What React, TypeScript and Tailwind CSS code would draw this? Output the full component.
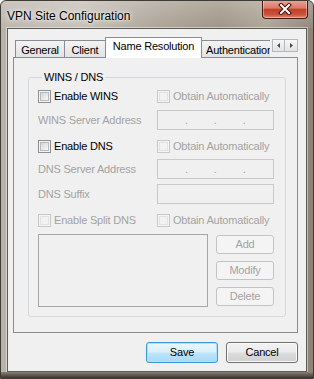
import React from "react";

// small win7 style checkbox
const Check = ({ disabled }: { disabled?: boolean }) => (
  <span
    className={`w-[13px] h-[13px] shrink-0 border flex items-center justify-center ${
      disabled ? "border-[#c8c8c8] bg-[#f4f4f4]" : "border-[#8e8f8f] bg-[#f4f4f4]"
    }`}
  >
    <span
      className={`w-[9px] h-[9px] border ${
        disabled
          ? "border-[#e2e2e2] bg-[#f2f2f2]"
          : "border-[#b6b9bd] bg-[linear-gradient(135deg,#d2d5d9,#f7f7f7)]"
      }`}
    />
  </span>
);

const CheckRow = ({ label, disabled }: { label: string; disabled?: boolean }) => (
  <div className="flex items-center gap-[3px] h-[15px]">
    <Check disabled={disabled} />
    <span className={disabled ? "text-[#a3a3a3]" : "text-black"}>{label}</span>
  </div>
);

const IpField = () => (
  <div className="h-[20px] border border-[#c9c9c9] bg-[#f0f0f0] flex items-center pl-[27px] gap-[26px] text-[#a3a3a3]">
    <span>.</span>
    <span>.</span>
    <span>.</span>
  </div>
);

const SideButton = ({ label }: { label: string }) => (
  <div className="h-[19px] w-[58px] rounded-[3px] border border-[#c2c4c6] bg-[#f4f4f4] flex items-center justify-center text-[#a3a3a3]">
    {label}
  </div>
);

const App = () => {
  return (
    <div className="w-[314px] h-[379px] flex flex-col border border-[#3f3b37] rounded-t-[6px] bg-[linear-gradient(90deg,#b9b2a9_0%,#c3bdb5_25%,#aaa093_50%,#9b9081_70%,#a9a092_85%,#8d8275_100%)] font-['Liberation_Sans',Arial,sans-serif] text-[11px] tracking-[-0.2px] overflow-hidden">
      {/* title bar */}
      <div className="h-[28px] flex items-start justify-between pl-[6px] pr-[5px] pt-[7px] bg-[linear-gradient(180deg,rgba(255,255,255,0.25),rgba(255,255,255,0.05))]">
        <span className="text-[12px] leading-[16px] tracking-normal text-black [text-shadow:0_0_7px_#ffffff,0_0_3px_#ffffff]">
          VPN Site Configuration
        </span>
        <div className="-mt-[8px] w-[46px] h-[19px] rounded-b-[4px] border border-t-0 border-[#4a1a12] bg-[linear-gradient(180deg,#e9a898_0%,#d97a66_45%,#c3402a_52%,#c9523b_80%,#dc8a6a_100%)] shadow-[inset_0_0_0_1px_rgba(255,255,255,0.35)] flex items-center justify-center">
          <svg width="14" height="12" viewBox="0 0 14 12">
            <path d="M3 2 L11 10 M11 2 L3 10" stroke="#3a1008" strokeWidth="4" strokeLinecap="square" />
            <path d="M3 2 L11 10 M11 2 L3 10" stroke="#ffffff" strokeWidth="2" strokeLinecap="square" />
          </svg>
        </div>
      </div>

      {/* client area */}
      <div className="flex-1 mx-[6px] border border-[#5e5a56] shadow-[0_0_0_1px_rgba(255,255,255,0.45)] bg-[#f0f0f0] flex flex-col pl-[5px] pr-[8px] pt-[8px] pb-[8px]">
        {/* tab strip */}
        <div className="relative z-10 -mb-px h-[21px] flex pl-[2px]">
          <div className="flex-1 flex overflow-hidden h-[21px]">
            <div className="mt-[3px] h-[17px] w-[50px] shrink-0 border border-b-0 border-[#898c95] bg-[linear-gradient(180deg,#f3f3f3,#e3e3e3)] text-center pt-[3px] leading-[13px]">
              General
            </div>
            <div className="-ml-px mt-[3px] h-[17px] w-[42px] shrink-0 border border-b-0 border-[#898c95] bg-[linear-gradient(180deg,#f3f3f3,#e3e3e3)] text-center pt-[3px] leading-[13px]">
              Client
            </div>
            <div className="-ml-px h-[21px] w-[97px] shrink-0 border border-b-0 border-[#898c95] bg-white text-center pt-[2px] leading-[13px]">
              Name Resolution
            </div>
            <div className="-ml-px mt-[3px] h-[17px] w-[84px] shrink-0 border border-b-0 border-[#898c95] bg-[linear-gradient(180deg,#f3f3f3,#e3e3e3)] pl-[4px] pt-[3px] leading-[13px] whitespace-nowrap">
              Authentication
            </div>
          </div>
          <div className="flex mt-[2px] ml-[2px] h-[13px]">
            <div className="w-[13px] h-[13px] border border-[#b5b8bd] bg-[linear-gradient(180deg,#f7f7f7,#e2e2e2)] flex items-center justify-center">
              <svg width="4" height="5" viewBox="0 0 4 5">
                <path d="M3 0 L0 2.5 L3 5 Z" fill="#4a4a4a" />
              </svg>
            </div>
            <div className="w-[13px] h-[13px] border border-l-0 border-[#b5b8bd] bg-[linear-gradient(180deg,#f7f7f7,#e2e2e2)] flex items-center justify-center">
              <svg width="4" height="5" viewBox="0 0 4 5">
                <path d="M1 0 L4 2.5 L1 5 Z" fill="#4a4a4a" />
              </svg>
            </div>
          </div>
        </div>

        {/* tab panel */}
        <div className="h-[276px] border border-[#898c95] bg-[#f0f0f0] pt-[13px] pl-[14px] pr-[12px]">
          <fieldset className="border border-[#d5d9dc] rounded-[3px] pl-[9px] pr-[11px] pb-[9px] leading-[13px]">
            <legend className="ml-[4px] px-[2px] leading-[12px]">WINS / DNS</legend>

            <div className="mt-[6px] grid grid-cols-[119px_1fr]">
              <CheckRow label="Enable WINS" />
              <CheckRow label="Obtain Automatically" disabled />
            </div>
            <div className="mt-[6px] grid grid-cols-[119px_1fr] items-center">
              <span className="text-[#a3a3a3]">WINS Server Address</span>
              <IpField />
            </div>

            <div className="mt-[9px] grid grid-cols-[119px_1fr]">
              <CheckRow label="Enable DNS" />
              <CheckRow label="Obtain Automatically" disabled />
            </div>
            <div className="mt-[5px] grid grid-cols-[119px_1fr] items-center">
              <span className="text-[#a3a3a3]">DNS Server Address</span>
              <IpField />
            </div>
            <div className="mt-[5px] grid grid-cols-[119px_1fr] items-center">
              <span className="text-[#a3a3a3]">DNS Suffix</span>
              <div className="h-[20px] border border-[#c9c9c9] bg-[#f0f0f0]" />
            </div>

            <div className="mt-[9px] grid grid-cols-[119px_1fr]">
              <CheckRow label="Enable Split DNS" disabled />
              <CheckRow label="Obtain Automatically" disabled />
            </div>

            <div className="mt-[6px] flex gap-[8px]">
              <div className="w-[170px] h-[73px] border border-[#a6a6a6] bg-[#f0f0f0]" />
              <div className="flex flex-col gap-[7px] pt-[1px]">
                <SideButton label="Add" />
                <SideButton label="Modify" />
                <SideButton label="Delete" />
              </div>
            </div>
          </fieldset>
        </div>

        {/* dialog buttons */}
        <div className="mt-[9px] flex justify-end gap-[8px]">
          <div className="w-[72px] h-[21px] rounded-[3px] border border-[#3c9ad6] shadow-[inset_0_0_0_1px_#a9e2f9] bg-[linear-gradient(180deg,#eaf6fd_0%,#d9f0fc_48%,#bee6fd_52%,#a7d9f5_100%)] flex items-center justify-center text-black">
            Save
          </div>
          <div className="w-[72px] h-[21px] rounded-[3px] border border-[#707070] shadow-[inset_0_0_0_1px_#fbfbfb] bg-[linear-gradient(180deg,#f2f2f2_0%,#ebebeb_48%,#dddddd_52%,#cfcfcf_100%)] flex items-center justify-center text-black">
            Cancel
          </div>
        </div>
      </div>

      {/* bottom frame */}
      <div className="h-[6px] bg-[linear-gradient(180deg,#8a8074,#3a342e)]" />
    </div>
  );
};

export default App;
